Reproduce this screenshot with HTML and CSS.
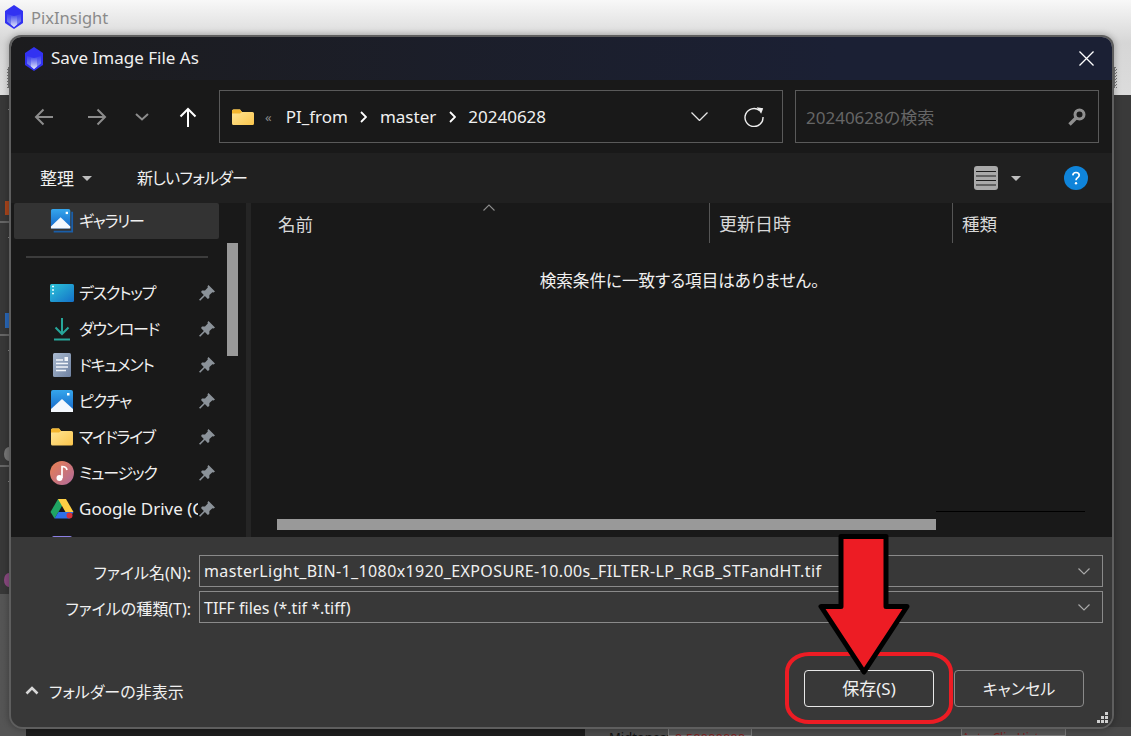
FILE: index.html
```html
<!DOCTYPE html>
<html lang="ja">
<head>
  <meta charset="UTF-8" />
  <title>Save Image File As</title>
  <link rel="stylesheet" href="styles.css">
</head>
<body>
  <svg width="0" height="0" class="defs">
    <defs>
      <linearGradient id="gradSky" x1="0" y1="0" x2="0" y2="1"><stop offset="0" stop-color="#35a6ec"/><stop offset="1" stop-color="#1465c8"/></linearGradient>
      <linearGradient id="gradDesk" x1="0" y1="0" x2="1" y2="1"><stop offset="0" stop-color="#2cc4d8"/><stop offset="1" stop-color="#1470c8"/></linearGradient>
      <linearGradient id="gradFolder" x1="0" y1="0" x2="1" y2="1"><stop offset="0" stop-color="#ffe79a"/><stop offset="1" stop-color="#fbc64c"/></linearGradient>
      <linearGradient id="gradDoc" x1="0" y1="0" x2="1" y2="1"><stop offset="0" stop-color="#a9b9cf"/><stop offset="1" stop-color="#6f82a2"/></linearGradient>
      <linearGradient id="gradMusic" x1="0" y1="0" x2="1" y2="1"><stop offset="0" stop-color="#ea8050"/><stop offset="1" stop-color="#b06a9c"/></linearGradient>
      <linearGradient id="gradCube" x1="0" y1="0" x2="0" y2="1"><stop offset="0" stop-color="#3d3df2"/><stop offset="1" stop-color="#8fa2ea"/></linearGradient>
      <linearGradient id="gradCubeCore" x1="0" y1="0" x2="0" y2="1"><stop offset="0" stop-color="#5258ee"/><stop offset="1" stop-color="#e4e9fa"/></linearGradient>
      <symbol id="cube" viewBox="0 0 18 24">
        <path d="M9 0 18 6V18L9 24 0 18V6Z" fill="#3232f2"/>
        <path d="M2 9 9 11 16 9V16.500L9 22 2 16.500Z" fill="url(#gradCube)"/>
        <path d="M6 11H12V19.500L9 22 6 19.500Z" fill="url(#gradCubeCore)"/>
      </symbol>
      <symbol id="pin" viewBox="0 0 18 18">
        <path d="M10.500 1 17 7.500 15.600 8.600 14.400 8.200 11.400 11 11.300 14 9.800 15 6.900 12 2.200 16.800 1 15.700 5.800 11 3 8 4 6.600 7 6.600 9.800 3.600 9.500 2.200Z" fill="#8b9299"/>
      </symbol>
    </defs>
  </svg>

  <div class="app">
    <header class="app-title">
      <svg class="app-logo"><use href="#cube"/></svg>
      <span class="app-name">PixInsight</span>
      <i class="dither left"></i>
      <i class="dither right"></i>
    </header>
    <div class="app-body">
      <div class="app-side">
        <div class="tool-panel"><i class="tool-mark orange"></i></div>
        <div class="tool-panel mid"><i class="tool-mark blue"></i></div>
        <div class="tool-panel tall"><i class="tool-mark gear"></i></div>
        <div class="tool-panel"><i class="tool-mark ball"></i></div>
      </div>
    </div>
    <footer class="app-status">
      <span class="status-label">Midtones:</span>
      <span class="status-box">0.50000000</span>
      <span class="status-btn">Auto-Clip Histogram</span>
    </footer>
  </div>

  <div class="dialog">
    <div class="titlebar">
      <svg class="title-logo"><use href="#cube"/></svg>
      <span class="title-text">Save Image File As</span>
      <svg class="close-btn" viewBox="0 0 16 16"><path d="M.5.5 15.500 15.500M15.500.5.5 15.500" stroke="#fff" stroke-width="1.400" fill="none"/></svg>
    </div>

    <div class="addressrow">
      <div class="nav">
        <button class="nav-btn wide"><svg viewBox="0 0 20 20" width="20" height="20"><path d="M19 10H2M9.500 2.500 2 10l7.500 7.500" stroke="#8c8c8c" stroke-width="2" fill="none"/></svg></button>
        <button class="nav-btn wide"><svg viewBox="0 0 20 20" width="20" height="20"><path d="M1 10H18M10.500 2.500 18 10l-7.500 7.500" stroke="#8c8c8c" stroke-width="2" fill="none"/></svg></button>
        <button class="nav-btn"><svg viewBox="0 0 14 8" width="14" height="8"><path d="M1 1 7 6.500 13 1" stroke="#8c8c8c" stroke-width="2" fill="none"/></svg></button>
        <button class="nav-btn wide"><svg viewBox="0 0 20 20" width="20" height="20"><path d="M10 20V2M2.500 9.500 10 2l7.500 7.500" stroke="#fff" stroke-width="2" fill="none"/></svg></button>
      </div>
      <div class="pathbox">
        <svg class="path-folder" viewBox="0 0 22 16"><path d="M0 2a1.500 1.500 0 0 1 1.500-1.500H8L10 3H20.500A1.500 1.500 0 0 1 22 4.500V14.500A1.500 1.500 0 0 1 20.500 16H1.500A1.500 1.500 0 0 1 0 14.500Z" fill="url(#gradFolder)"/><path d="M0 2a1.500 1.500 0 0 1 1.500-1.500H8L10 3 8 4.500H0Z" fill="#f3b52e"/></svg>
        <span class="path-more">«</span>
        <span class="crumb">PI_from</span>
        <svg class="crumb-sep" viewBox="0 0 7 12"><path d="M1 1 6 6 1 11" stroke="#fff" stroke-width="1.800" fill="none"/></svg>
        <span class="crumb">master</span>
        <svg class="crumb-sep" viewBox="0 0 7 12"><path d="M1 1 6 6 1 11" stroke="#fff" stroke-width="1.800" fill="none"/></svg>
        <span class="crumb">20240628</span>
        <svg class="path-drop" viewBox="0 0 17 9"><path d="M.5.5 8.500 8.500 16.500.5" stroke="#e6e6e6" stroke-width="1.300" fill="none"/></svg>
        <svg class="path-refresh" viewBox="0 0 20 20"><path d="M15.500 3.400A9 9 0 1 0 19 10" stroke="#eee" stroke-width="1.400" fill="none"/><path d="M12.500 .5 19 .8 17.500 6.500Z" fill="#eee" transform="rotate(6 16 3)"/></svg>
      </div>
      <div class="searchbox">
        <span class="search-hint">20240628の検索</span>
        <svg class="search-icon" viewBox="0 0 18 18"><circle cx="11.500" cy="6.500" r="4.500" stroke="#8f8f8f" stroke-width="3" fill="none"/><path d="M8 10 1.500 16.500" stroke="#8f8f8f" stroke-width="3.400"/></svg>
      </div>
    </div>

    <div class="commandbar">
      <span class="cmd organize">整理</span>
      <i class="caret cmd-caret"></i>
      <span class="cmd new-folder">新しいフォルダー</span>
      <svg class="view-icon" viewBox="0 0 24 24"><rect width="24" height="24" rx="3" fill="#a9a9a9"/><path d="M2 5.500H22M2 10H22M2 14.500H22M2 19H22" stroke="#1c1c1c" stroke-width="1.200"/></svg>
      <i class="caret view-caret"></i>
      <svg class="help-icon" viewBox="0 0 24 24"><circle cx="12" cy="12" r="12" fill="#0f84da"/><path d="M8.800 9.300C9 7.300 10.400 6.500 12 6.500c1.800 0 3.200 1 3.200 2.700 0 2.500-3.200 2.500-3.200 5" stroke="#fff" stroke-width="1.700" fill="none"/><circle cx="12" cy="17.300" r="1.200" fill="#fff"/></svg>
    </div>

    <div class="browser">
      <nav class="sidebar">
        <div class="side-list">
          <div class="side-item selected">
            <svg class="side-icon" viewBox="0 0 24 26"><path d="M3 24.500H23V3" stroke="#1a5ea8" stroke-width="2" fill="none"/><rect x="0" y="0" width="21" height="21" rx="2" fill="url(#gradSky)"/><path d="M0 19 10.500 9 21 19V21H0Z" fill="#f4f8fd"/><rect x="16" y="3" width="2.500" height="2.500" fill="#fff"/></svg>
            <span class="side-label kana">ギャラリー</span>
          </div>
          <div class="side-gap"><hr class="side-rule"></div>
          <div class="side-item">
            <svg class="side-icon" viewBox="0 0 24 18"><rect width="24" height="18" rx="1.500" fill="url(#gradDesk)"/><path d="M2 2.500H4M2 6H4M2 9.500H4" stroke="#e6fbff" stroke-width="1.600"/></svg>
            <span class="side-label kana">デスクトップ</span>
            <svg class="side-pin"><use href="#pin"/></svg>
          </div>
          <div class="side-item">
            <svg class="side-icon" viewBox="0 0 24 24"><path d="M12 1V17M5.500 10.500 12 17l6.500-6.500M4 22.500H20" stroke="#27a69a" stroke-width="2" fill="none"/></svg>
            <span class="side-label kana">ダウンロード</span>
            <svg class="side-pin"><use href="#pin"/></svg>
          </div>
          <div class="side-item">
            <svg class="side-icon" viewBox="0 0 24 24"><rect x="3" width="18" height="24" rx="1.500" fill="url(#gradDoc)"/><path d="M6 7H13M6 10.500H18M6 14H18M6 17.500H16" stroke="#f2f5fa" stroke-width="1.300"/><rect x="14.500" y="4" width="3.500" height="4" fill="#f2f5fa"/></svg>
            <span class="side-label kana">ドキュメント</span>
            <svg class="side-pin"><use href="#pin"/></svg>
          </div>
          <div class="side-item">
            <svg class="side-icon" viewBox="0 0 24 24"><rect x="1" y="1" width="22" height="22" rx="2" fill="url(#gradSky)"/><path d="M1 20 12 10 23 20V23H1Z" fill="#f4f8fd"/><rect x="17" y="4" width="2.500" height="2.500" fill="#fff"/></svg>
            <span class="side-label kana">ピクチャ</span>
            <svg class="side-pin"><use href="#pin"/></svg>
          </div>
          <div class="side-item">
            <svg class="side-icon" viewBox="0 0 24 18"><path d="M1 2A1.500 1.500 0 0 1 2.500.5H9L11 3H21.500A1.500 1.500 0 0 1 23 4.500V16A1.500 1.500 0 0 1 21.500 17.500H2.500A1.500 1.500 0 0 1 1 16Z" fill="url(#gradFolder)"/><path d="M1 2A1.500 1.500 0 0 1 2.500.5H9L11 3 9 4.500H1Z" fill="#f3b52e"/></svg>
            <span class="side-label kana">マイドライブ</span>
            <svg class="side-pin"><use href="#pin"/></svg>
          </div>
          <div class="side-item">
            <svg class="side-icon" viewBox="0 0 24 24"><circle cx="12" cy="12" r="12" fill="url(#gradMusic)"/><path d="M12 17V5.500c2.500 0 4.500 1 5 3.500" stroke="#fff" stroke-width="1.700" fill="none"/><circle cx="9.500" cy="17" r="3" fill="#fff"/></svg>
            <span class="side-label kana">ミュージック</span>
            <svg class="side-pin"><use href="#pin"/></svg>
          </div>
          <div class="side-item">
            <svg class="side-icon" viewBox="0 0 24 22"><path d="M8 1H16L8.500 14 4.500 20.500.5 14Z" fill="#1fa463"/><path d="M8 1H16L23.500 14H15.500Z" fill="#ffcf44"/><path d="M4.500 20.500 8.500 14H23.500L19.500 20.500Z" fill="#2f70e8"/><circle cx="19.500" cy="17.500" r="3" fill="#d8323a"/></svg>
            <span class="side-label">Google Drive (G:)</span>
            <svg class="side-pin"><use href="#pin"/></svg>
          </div>
          <div class="side-item">
            <svg class="side-icon" viewBox="0 0 24 24"><rect x="2" y="3" width="20" height="20" rx="2" fill="#8b7fe3"/></svg>
            <span class="side-label kana">PC</span>
          </div>
        </div>
        <div class="side-scroll"><i class="side-thumb"></i></div>
      </nav>
      <div class="splitter"></div>
      <section class="filelist">
        <div class="list-head">
          <div class="col col-name">名前<svg class="sort-arrow" viewBox="0 0 12 7"><path d="M.5 6.500 6 1 11.500 6.500" stroke="#8a8a8a" stroke-width="1.100" fill="none"/></svg></div>
          <div class="col col-date">更新日時</div>
          <div class="col col-type">種類</div>
        </div>
        <p class="empty-msg">検索条件に一致する項目はありません。</p>
        <div class="hscroll">
          <i class="hscroll-line"></i>
          <i class="hscroll-thumb"></i>
        </div>
      </section>
    </div>

    <div class="savepanel">
      <div class="field-row">
        <label class="field-label">ファイル名(N):</label>
        <div class="field-box">
          <span class="field-value name">masterLight_BIN-1_1080x1920_EXPOSURE-10.00s_FILTER-LP_RGB_STFandHT.tif</span>
          <svg class="field-drop" viewBox="0 0 12 7"><path d="M.5.5 6 6 11.500.5" stroke="#a8a8a8" stroke-width="1.200" fill="none"/></svg>
        </div>
      </div>
      <div class="field-row">
        <label class="field-label">ファイルの種類(T):</label>
        <div class="field-box">
          <span class="field-value type">TIFF files (*.tif *.tiff)</span>
          <svg class="field-drop" viewBox="0 0 12 7"><path d="M.5.5 6 6 11.500.5" stroke="#a8a8a8" stroke-width="1.200" fill="none"/></svg>
        </div>
      </div>
      <div class="action-row">
        <svg class="hide-chevron" viewBox="0 0 14 9"><path d="M1.500 7.500 7 2 12.500 7.500" stroke="#d8d8d8" stroke-width="2.600" fill="none"/></svg>
        <span class="hide-label">フォルダーの非表示</span>
        <button class="dlg-btn primary">保存(S)</button>
        <button class="dlg-btn">キャンセル</button>
      </div>
      <svg class="grip" viewBox="0 0 11 11"><path d="M8 0h3v3H8zM4 4h3v3H4zM8 4h3v3H8zM0 8h3v3H0zM4 8h3v3H4zM8 8h3v3H8z" fill="#d0d0d0"/></svg>
    </div>
  </div>

  <!-- annotations drawn on top of the screenshot -->
  <div class="note-ring"></div>
  <svg class="note-arrow" viewBox="0 0 100 146"><path d="M24 3.500H69V73.500H90L47 139 4 73.500H24Z" fill="#ed1c24" stroke="#000" stroke-width="5" stroke-linejoin="round"/></svg>
</body>
</html>
```

FILE: styles.css
```css
html, body {
  margin: 0;
  padding: 0;
  width: 1131px;
  height: 736px;
  overflow: hidden;
  background: #3a3a3a;
  font-family: "Noto Sans", "Noto Sans CJK JP", sans-serif;
  font-feature-settings: "palt";
}
.defs { position: absolute; }
button { font: inherit; }
svg { display: block; flex: none; }

/* app behind the dialog */
.app {
  height: 736px;
  display: flex;
  flex-direction: column;
}
.app-title {
  height: 95px;
  flex: none;
  padding: 5px 0 0 5px;
  box-sizing: border-box;
  display: flex;
  align-items: flex-start;
  gap: 8px;
  position: relative;
  background: linear-gradient(#f8f8f8, #d6d6d6 45%, #dcdcdc);
  color: #8a8a8a;
  font-size: 16.500px;
}
.app-logo { width: 18px; height: 24px; }
.app-name { padding-top: 1px; }
.dither {
  position: absolute;
  top: 67px;
  width: 4px;
  height: 21px;
  background: repeating-conic-gradient(#777 0 25%, transparent 0 50%) 0 0 / 3px 3px;
}
.dither.left { left: 7px; }
.dither.right { left: 1113px; }
.app-body {
  flex: 1;
  background: linear-gradient(90deg, #555, #3a3a3a 60%);
}
.app-side {
  width: 26px;
  background: #383838;
}
.tool-panel {
  height: 126px;
  border-bottom: 2px solid #666;
  position: relative;
}
.tool-panel::before {
  content: "";
  position: absolute;
  left: 8px;
  top: 14px;
  width: 4px;
  height: 1px;
  background: #888;
}
.tool-panel.mid { height: 111px; }
.tool-panel.tall { height: 129px; }
.tool-panel:last-child { height: 127px; border: 0; }
.tool-mark { position: absolute; left: 5px; width: 8px; }
.tool-mark.orange { top: 106px; height: 14px; background: #a8451c; }
.tool-mark.blue { top: 90px; height: 15px; background: #2a68b8; }
.tool-mark.gear { top: 111px; height: 14px; left: 4px; width: 10px; background: #777; border-radius: 50%; }
.tool-mark.ball { top: 106px; height: 14px; left: 4px; width: 10px; background: #8a4a80; border-radius: 50%; }
.app-status {
  height: 9px;
  flex: none;
  overflow: hidden;
  display: flex;
  padding-left: 609px;
  background: linear-gradient(90deg, #555 26px, #1c1c1c 26px, #1c1c1c 585px, #4a4a4a 585px);
  font-size: 13px;
  line-height: 20px;
  color: #111;
}
.status-label { width: 59px; }
.status-box {
  width: 82px;
  background: #555;
  color: #7a1f1f;
  border: 1px solid #777;
  text-align: center;
}
.status-btn {
  margin-left: 209px;
  width: 103px;
  border: 1px solid #777;
  background: #555;
  color: #7a1f1f;
  white-space: nowrap;
  overflow: hidden;
  font-size: 12px;
  text-align: center;
}

/* the dialog window */
.dialog {
  position: absolute;
  left: 11px;
  top: 37px;
  width: 1101px;
  height: 690px;
  display: flex;
  flex-direction: column;
  border-radius: 10px 10px 12px 12px;
  overflow: hidden;
  color: #f0f0f0;
  box-shadow: 0 0 0 2px #5e5e5e, 0 0 6px 3px rgba(0,0,0,0.25);
}
.titlebar {
  height: 43px;
  flex: none;
  display: flex;
  align-items: center;
  padding: 0 18px 0 14px;
  background: linear-gradient(90deg, #1c1c1e, #1b2034 75%);
  font-size: 17px;
}
.title-logo { width: 18px; height: 24px; }
.title-text { margin-left: 8px; flex: 1; padding-bottom: 2px; }
.close-btn { width: 15px; height: 15px; }

.addressrow {
  height: 73px;
  flex: none;
  box-sizing: border-box;
  padding-top: 10px;
  display: flex;
  background: #191919;
}
.nav {
  width: 208px;
  height: 52px;
  flex: none;
  padding: 2px 0 0 6px;
  box-sizing: border-box;
  display: flex;
  align-items: center;
}
.nav-btn {
  width: 38px;
  height: 40px;
  padding: 0;
  background: none;
  border: 0;
  display: flex;
  align-items: center;
  justify-content: center;
}
.nav-btn.wide { width: 53px; }
.pathbox, .searchbox {
  height: 53px;
  box-sizing: border-box;
  border: 1px solid #5a5a5a;
  display: flex;
  align-items: center;
}
.pathbox {
  width: 564px;
  padding: 0 18px 0 12px;
  font-size: 17px;
}
.path-folder { width: 22px; height: 16px; }
.path-more { margin: 0 14px 0 11px; color: #888; font-size: 13px; }
.crumb { color: #f0f0f0; }
.crumb-sep { width: 7px; height: 12px; margin: 0 12.500px; }
.path-drop { width: 17px; height: 9px; margin-left: auto; }
.path-refresh { width: 20px; height: 20px; margin-left: 36px; }
.searchbox {
  width: 304px;
  margin-left: 12px;
  padding: 0 12px 0 10px;
  font-size: 17px;
}
.search-hint { flex: 1; color: #666; }
.search-icon { width: 18px; height: 18px; }

.commandbar {
  height: 50px;
  flex: none;
  box-sizing: border-box;
  display: flex;
  align-items: center;
  padding: 0 24px 0 29px;
  background: #202020;
  font-size: 16px;
}
.cmd { white-space: nowrap; padding-bottom: 2px; }
.organize { font-size: 17px; }
.caret {
  width: 0;
  height: 0;
  border: 5px solid transparent;
  border-top-color: #bdbdbd;
  border-bottom: 0;
}
.cmd-caret { margin-left: 8px; }
.new-folder { margin-left: 45px; margin-right: auto; letter-spacing: -0.700px; }
.view-icon { width: 24px; height: 24px; }
.view-caret { margin-left: 13px; margin-right: 43px; }
.help-icon { width: 24px; height: 24px; }

.browser {
  height: 334px;
  flex: none;
  display: flex;
  background: #191919;
  font-size: 17px;
}
.sidebar {
  width: 235px;
  flex: none;
  display: flex;
  overflow: hidden;
}
.side-list {
  width: 205px;
  margin-left: 3px;
  flex: none;
}
.side-item {
  height: 36px;
  box-sizing: border-box;
  padding: 0 3px 0 36px;
  display: flex;
  align-items: center;
}
.side-item.selected { background: #333; border-radius: 2px; }
.side-icon { width: 24px; height: 24px; }
.side-label {
  flex: 1;
  margin-left: 5px;
  padding-bottom: 2px;
  white-space: nowrap;
  overflow: hidden;
}
.side-label.kana { font-size: 16px; letter-spacing: -1.200px; }
.side-pin { width: 18px; height: 18px; }
.side-gap { height: 36px; display: flex; align-items: center; }
.side-rule {
  width: 182px;
  margin: 0 0 0 12px;
  border: 0;
  border-top: 2px solid #3c3c3c;
}
.side-scroll { width: 27px; padding-left: 8px; box-sizing: border-box; }
.side-thumb {
  display: block;
  width: 11px;
  height: 113px;
  margin-top: 40px;
  background: #999;
}
.splitter { width: 5px; flex: none; background: #252525; }

.filelist {
  flex: 1;
  display: flex;
  flex-direction: column;
}
.list-head { height: 40px; flex: none; display: flex; }
.col {
  box-sizing: border-box;
  display: flex;
  align-items: center;
  color: #d8d8d8;
  padding-left: 9px;
  font-size: 17.500px;
}
.col-name {
  width: 459px;
  padding-left: 27px;
  border-right: 1px solid #555;
  position: relative;
}
.col-date { width: 243px; border-right: 1px solid #555; font-size: 18px; }
.sort-arrow {
  position: absolute;
  left: 232px;
  top: 1px;
  width: 12px;
  height: 7px;
}
.empty-msg {
  margin: 26px 0 0;
  padding-right: 4px;
  text-align: center;
  font-size: 16.600px;
  line-height: 24px;
}
.hscroll { margin-top: auto; height: 26px; }
.hscroll-line {
  display: block;
  width: 149px;
  height: 1px;
  margin-left: 685px;
  background: #000;
}
.hscroll-thumb {
  display: block;
  width: 659px;
  height: 11px;
  margin: 7px 0 0 26px;
  background: #999;
}

/* bottom of the dialog */
.savepanel {
  flex: 1;
  position: relative;
  box-sizing: border-box;
  padding: 18px 9px 20px 0;
  display: flex;
  flex-direction: column;
  gap: 4px;
  background: #383838;
  font-size: 16px;
}
.field-row { display: flex; height: 32px; align-items: center; }
.field-label {
  width: 180px;
  flex: none;
  padding-top: 1px;
  text-align: right;
  white-space: nowrap;
}
.field-box {
  flex: 1;
  height: 32px;
  box-sizing: border-box;
  margin-left: 8px;
  border: 1px solid #8a8a8a;
  padding: 0 12px 0 4px;
  display: flex;
  align-items: center;
  justify-content: space-between;
  white-space: nowrap;
}
.field-value.name { letter-spacing: 0.390px; }
.field-value.type { padding-top: 1px; }
.field-drop { width: 12px; height: 7px; }
.action-row {
  margin-top: auto;
  height: 37px;
  display: flex;
  align-items: center;
  padding: 0 19px 0 14px;
}
.hide-chevron { width: 14px; height: 9px; margin-top: 4px; }
.hide-label { margin-left: 10px; margin-right: auto; padding-top: 5px; }
.dlg-btn {
  width: 130px;
  height: 37px;
  margin-left: 20px;
  padding: 0 0 2px;
  background: #383838;
  color: #f0f0f0;
  border: 1px solid #8a8a8a;
  border-radius: 4px;
  font-size: 16px;
}
.dlg-btn.primary { border-color: #e8e8e8; font-size: 17px; }
.grip {
  position: absolute;
  right: 4px;
  bottom: 4px;
  width: 11px;
  height: 11px;
}

/* red callouts */
.note-ring {
  position: absolute;
  left: 785px;
  top: 652px;
  width: 168px;
  height: 72px;
  box-sizing: border-box;
  border: 4px solid #ed1c24;
  border-radius: 24px / 20px;
}
.note-arrow {
  position: absolute;
  left: 817px;
  top: 533px;
  width: 100px;
  height: 146px;
}
```
